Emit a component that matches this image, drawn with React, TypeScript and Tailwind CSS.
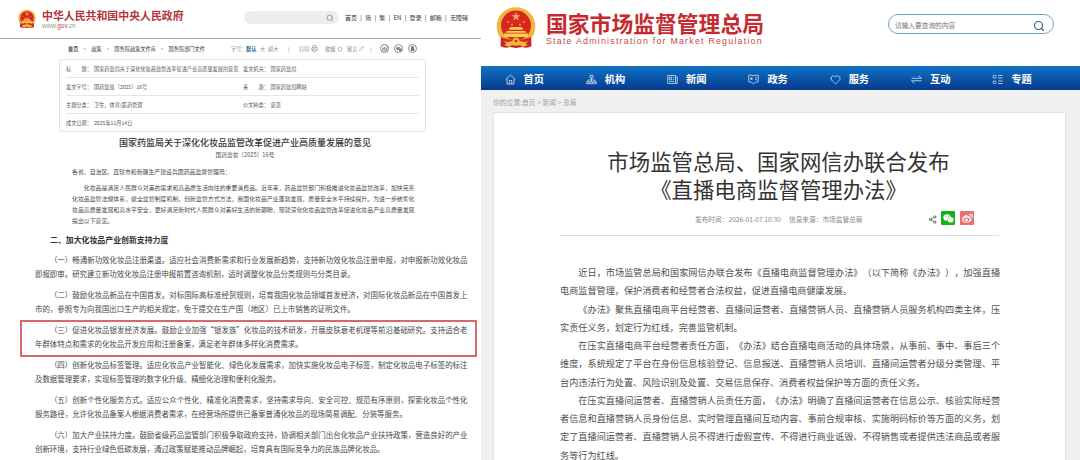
import { FaQq, FaWeibo, FaWeixin } from "react-icons/fa";
import { Heart, Pencil, Printer, Search, Share2, Star } from "lucide-react";

const docMeta = [
  ["标　　题：", "国家药监局关于深化化妆品监管改革促进产业高质量发展的意见", "发文机关：", "国家药监局"],
  ["发文字号：", "国药监妆〔2025〕16号", "来　　源：", "国家药监局网站"],
  ["主题分类：", "卫生、体育\\医药管理", "公文种类：", "意见"],
  ["成文日期：", "2025年11月14日", "", ""],
];

const intro = [
  "　　化妆品是满足人民群众对美的需求和高品质生活向往的重要消费品。近年来，药品监管部门积极推进化妆品监管改革，加快完善",
  "化妆品监管法规体系，健全监管制度机制，创新监管方式方法，我国化妆品产业蓬勃发展，质量安全水平持续提升。为进一步统筹化",
  "妆品高质量发展和高水平安全，更好满足新时代人民群众对美好生活的新期盼，现就深化化妆品监管改革促进化妆品产业高质量发展",
  "提出以下意见。",
];

const articles = [
  [
    "　　（一）畅通新功效化妆品注册渠道。适应社会消费新需求和行业发展新趋势，支持新功效化妆品注册申报，对申报新功效化妆品",
    "即报即审。研究建立新功效化妆品注册申报前置咨询机制，适时调整化妆品分类规则与分类目录。",
  ],
  [
    "　　（二）鼓励化妆品新品在中国首发。对标国际高标准经贸规则，培育我国化妆品领域首发经济，对国际化妆品新品在中国首发上",
    "市的，参照专为向我国出口生产的相关规定，免于提交在生产国（地区）已上市销售的证明文件。",
  ],
  [
    "　　（三）促进化妆品银发经济发展。鼓励企业加强“银发族”化妆品的技术研发，开展皮肤衰老机理等前沿基础研究。支持适合老",
    "年群体特点和需求的化妆品开发应用和注册备案，满足老年群体多样化消费需求。",
  ],
  [
    "　　（四）创新化妆品标签管理。适应化妆品产业智能化、绿色化发展需求，加快实施化妆品电子标签，制定化妆品电子标签的标注",
    "及数据管理要求，实现标签管理的数字化升级、精细化治理和便利化服务。",
  ],
  [
    "　　（五）创新个性化服务方式。适应公众个性化、精准化消费需求，坚持需求导向、安全可控、规范有序原则，探索化妆品个性化",
    "服务路径，允许化妆品备案人根据消费者需求，在经营场所提供已备案普通化妆品的现场简易调配、分装等服务。",
  ],
  [
    "　　（六）加大产业扶持力度。鼓励省级药品监管部门积极争取政府支持，协调相关部门出台化妆品产业扶持政策，营造良好的产业",
    "创新环境，支持行业绿色低碳发展，通过政策赋能推动品牌崛起，培育具有国际竞争力的民族品牌化妆品。",
  ],
];

const newsLines = [
  "　　近日，市场监管总局和国家网信办联合发布《直播电商监督管理办法》（以下简称《办法》），加强直播",
  "电商监督管理，保护消费者和经营者合法权益，促进直播电商健康发展。",
  "　　《办法》聚焦直播电商平台经营者、直播间运营者、直播营销人员、直播营销人员服务机构四类主体，压",
  "实责任义务，划定行为红线，完善监管机制。",
  "　　在压实直播电商平台经营者责任方面，《办法》结合直播电商活动的具体场景，从事前、事中、事后三个",
  "维度，系统规定了平台在身份信息核验登记、信息报送、直播营销人员培训、直播间运营者分级分类管理、平",
  "台内违法行为处置、风险识别及处置、交易信息保存、消费者权益保护等方面的责任义务。",
  "　　在压实直播间运营者、直播营销人员责任方面，《办法》明确了直播间运营者在信息公示、核验实际经营",
  "者信息和直播营销人员身份信息、实时管理直播间互动内容、事前合规审核、实施明码标价等方面的义务，划",
  "定了直播间运营者、直播营销人员不得进行虚假宣传、不得进行商业诋毁、不得销售或者提供违法商品或者服",
  "务等行为红线。",
];

function Emblem({ className }: { className: string }) {
  return (
    <svg viewBox="0 0 40 42" className={className}>
      <path d="M5 28 L35 28 L35.5 39 Q31 42 26 40 L20 41 L14 40 Q9 42 4.500 39 Z" fill="#c9251f" />
      <circle cx="20" cy="19.500" r="19.300" fill="#f0b53c" />
      <circle cx="20" cy="18.500" r="15" fill="#d9271f" />
      <path d="M20 5.200l1.100 3.100h3.300l-2.700 2 1 3.200-2.700-2-2.700 2 1-3.200-2.700-2h3.300z" fill="#f3b06a" />
      <g fill="#f3a860">
        <circle cx="12" cy="15" r="1" />
        <circle cx="16" cy="17.500" r="1" />
        <circle cx="24" cy="17.500" r="1" />
        <circle cx="28" cy="15" r="1" />
      </g>
      <path
        d="M13 21.500l2-1.500h10l2 1.500v1.300H13zM11 24h18l1.500 1.800H9.500zM8 26.500h24v3.500H8z"
        fill="#f8cf52"
      />
      <path d="M5 30q15 6 30 0v4l-7 1-8-2-8 2-7-1z" fill="#d9271f" />
      <circle cx="20" cy="34" r="3.600" fill="#f0b53c" />
      <path d="M8 38l5-3 3 3-3 2zM32 38l-5-3-3 3 3 2z" fill="#f0b53c" />
      <circle cx="20" cy="34" r="1.300" fill="#d9271f" />
    </svg>
  );
}

// line icons of the blue navigation bar, all on a 22 unit grid
const navItems = [
  {
    label: "首页",
    icon: <path d="M1.500 11L11 2l9.500 9M4 9.500V20h14V9.500M8.500 20v-7h5v7" />,
  },
  {
    label: "机构",
    icon: (
      <path d="M8 2.500h6v5H8zM11 7.500V12M4 15.500V12h14v3.500M11 12v3.500M1.500 15.500h5v4h-5zM8.500 15.500h5v4h-5zM15.500 15.500h5v4h-5z" />
    ),
  },
  {
    label: "新闻",
    icon: (
      <path d="M1.500 3h15.500v16H1.500zM17 6h3.500v13H17M4.500 6.500h4.500v5H4.500zM11.500 7h3M11.500 11h3M4.500 15h10" />
    ),
  },
  {
    label: "政务",
    icon: (
      <>
        <path d="M1.500 2.500q5-1 9.500 1 4.500-2 9.500-1v13q-5 0-9.500 4-4.500-4-9.500-4zM14 7.500h4M14 11.500h4" />
        <path
          d="M7 6l1 2.200h2L8.500 9.800l.5 2.200-2-1.200-2 1.200.5-2.200L4 8.200h2z"
          fill="currentColor"
          stroke="none"
        />
      </>
    ),
  },
  { label: "服务", icon: <Heart width="22" height="22" strokeWidth={1.7} /> },
  { label: "互动", icon: <path d="M1 8.500h20l-6-5M21 13.500H1l6 5" /> },
  {
    label: "专题",
    icon: (
      <>
        <circle cx="5" cy="5.500" r="3" />
        <circle cx="5" cy="16.500" r="3" />
        <path d="M12 3h9M12 8h9M12 14h9M12 19h9" />
      </>
    ),
  },
];

function Lines({ lines, lineClass }: { lines: string[]; lineClass: string }) {
  return (
    <>
      {lines.map((line, index) => (
        <p
          key={line}
          className={`${lineClass} whitespace-nowrap ${
            line.length > 45 && index < lines.length - 1 ? "[text-align-last:justify]" : ""
          }`}
        >
          {line}
        </p>
      ))}
    </>
  );
}

function GovDocument() {
  return (
    <section className="flex h-[460px] w-[481px] shrink-0 flex-col overflow-hidden bg-white">
      <header className="flex h-[39px] shrink-0 border-b border-[#a3b0b0]">
        <Emblem className="mt-[9px] ml-[18px] h-[20px] w-[18px]" />
        <div className="mt-[8px] ml-[6px] w-[202px] whitespace-nowrap">
          <h1 className="text-[10.9px] leading-[15px] font-bold text-[#b3353b]">
            中华人民共和国中央人民政府
          </h1>
          <p className="font-['Liberation_Sans'] text-[6.4px] leading-[5px] text-[#999]">
            www.<span className="text-[#c0474b]">gov</span>.cn
          </p>
        </div>
        <div className="mt-[11px] flex h-[13px] w-[95px] items-center justify-end rounded-full bg-[#eeeeee] pr-[5px]">
          <Search className="size-[8px] text-[#777]" strokeWidth={2} />
        </div>
        <nav className="mt-[13px] ml-[6px] flex h-[10px] w-[123px] items-center justify-between text-[6px] leading-none whitespace-nowrap text-[#333]">
          <span>首页</span>
          <span>|</span>
          <span>简</span>
          <span>|</span>
          <span>繁</span>
          <span>|</span>
          <span>EN</span>
          <span>|</span>
          <span>登录</span>
          <span>|</span>
          <span>邮箱</span>
          <span>|</span>
          <span>无障碍</span>
        </nav>
      </header>

      <div className="flex h-[19px] shrink-0 items-center pl-[68px] text-[5.2px] leading-none whitespace-nowrap">
        <div className="flex w-[137px] justify-between text-[#333]">
          <span className="font-medium">首页</span>
          <span className="text-[#999]">&gt;</span>
          <span>政策</span>
          <span className="text-[#999]">&gt;</span>
          <span>国务院政策文件库</span>
          <span className="text-[#999]">&gt;</span>
          <span>国务院部门文件</span>
        </div>
        <div className="ml-[26px] flex items-center text-[#888]">
          <span className="w-[15px]">字号：</span>
          <span className="w-[14px] font-bold text-[#1c5f86]">默认</span>
          <span className="w-[8px]">大</span>
          <span className="w-[20px]">超大</span>
          <span className="w-[11px]">|</span>
          <span className="w-[12px]">打印</span>
          <Printer className="mr-[7px] size-[7px]" strokeWidth={2} />
          <span className="w-[12px]">收藏</span>
          <Star className="mr-[4px] size-[6px]" strokeWidth={2} />
          <span className="w-[12px]">留言</span>
          <Pencil className="mr-[6px] size-[5px]" strokeWidth={2} />
          <span className="w-[10px]">|</span>
          <div className="flex gap-[5px]">
            <span className="flex size-[9px] items-center justify-center rounded-full border border-[#888] text-[#777]">
              <FaWeibo className="size-[6px]" />
            </span>
            <span className="flex size-[9px] items-center justify-center rounded-full border border-[#888] text-[#777]">
              <FaWeixin className="size-[6px]" />
            </span>
            <span className="flex size-[9px] items-center justify-center rounded-full border border-[#888] text-[#777]">
              <FaQq className="size-[5px]" />
            </span>
          </div>
        </div>
      </div>

      <div className="mt-px ml-[59px] h-[73px] w-[367px] shrink-0 rounded-[3px] border border-[#e2e2e2] px-[6px] shadow-[0_0_1px_#eee]">
        {docMeta.map(([label, value, label2, value2]) => (
          <div
            key={label}
            className="flex h-[18px] items-center border-b border-[#e6e6e6] text-[5.17px] leading-none whitespace-nowrap text-[#555] last:border-b-0"
          >
            <span className="w-[28px]">{label}</span>
            <span className="w-[149px]">{value}</span>
            <span className="w-[27.500px]">{label2}</span>
            <span>{value2}</span>
          </div>
        ))}
      </div>

      <h2 className="mt-[4px] w-[490px] shrink-0 text-center text-[9px] leading-[14px] font-medium whitespace-nowrap text-[#333]">
        国家药监局关于深化化妆品监管改革促进产业高质量发展的意见
      </h2>
      <p className="w-[490px] shrink-0 text-center text-[5.7px] leading-[10px] text-[#555]">
        国药监妆〔2025〕16号
      </p>

      <div className="mt-[6px] ml-[72px] w-[342.500px] shrink-0 text-[5.88px] text-[#4a4a4a]">
        <p className="mb-[5px] leading-[11px] whitespace-nowrap">
          各省、自治区、直辖市和新疆生产建设兵团药品监督管理局：
        </p>
        <Lines lines={intro} lineClass="leading-[11px]" />
      </div>

      <h3 className="mt-[8px] ml-[50px] shrink-0 text-[7.9px] leading-[12px] font-semibold text-[#333]">
        二、加大化妆品产业创新支持力度
      </h3>

      <div className="relative mt-[7px] ml-[35px] w-[432.500px] shrink-0 text-[7.44px] text-[#484848]">
        {articles.map((lines) => (
          <div key={lines[0]} className="mb-[7px]">
            <Lines lines={lines} lineClass="leading-[14px]" />
          </div>
        ))}
        {/* highlight frame around article three */}
        <div className="absolute top-[67px] -left-[15px] h-[37px] w-[457px] border-2 border-[#d9686a]" />
      </div>
    </section>
  );
}

function MarketNews() {
  return (
    <section className="flex h-[460px] flex-1 flex-col overflow-hidden bg-[#f0f0f0]">
      <header className="flex h-[66px] shrink-0 bg-white">
        <Emblem className="mt-[7px] ml-[15px] h-[42px] w-[40px]" />
        <div className="mt-[9px] ml-[10px] w-[342px] whitespace-nowrap">
          <h1 className="text-[21.8px] leading-[27px] font-bold text-[#c62a2e]">
            国家市场监督管理总局
          </h1>
          <p className="font-['Liberation_Sans'] text-[8.8px] leading-[10px] tracking-[1.24px] text-[#c9484a]">
            State Administration for Market Regulation
          </p>
        </div>
        <div className="mt-[14px] flex h-[20px] w-[166px] items-center justify-between rounded-full border border-[#6fa3cc] pr-[8px] pl-[6px]">
          <span className="mt-[2px] text-[6.7px] leading-none text-[#777]">请输入要查询的内容</span>
          <Search className="mt-[3px] size-[12px] text-[#2f5f8c]" strokeWidth={2.3} />
        </div>
      </header>

      <nav className="flex h-[24px] shrink-0 items-center bg-gradient-to-b from-[#1173c6] to-[#083a8c] pl-[23.500px] text-white">
        {navItems.map((item) => (
          <div key={item.label} className="flex w-[81.300px] shrink-0 items-center pt-[2px]">
            <svg
              viewBox="0 0 22 22"
              className="size-[11px] text-[#cfe4f7]"
              fill="none"
              stroke="currentColor"
              strokeWidth="1.600"
            >
              {item.icon}
            </svg>
            <span className="ml-[8px] text-[10.2px] leading-none font-bold">{item.label}</span>
          </div>
        ))}
      </nav>

      <p className="h-[22px] shrink-0 pl-[12px] text-[6.8px] leading-[25px] text-[#a3a3a3]">
        你的位置:首页 &gt; 新闻 &gt; 总局
      </p>

      <article className="ml-[12px] flex h-[360px] w-[573px] shrink-0 flex-col border border-[#e3e3e3] bg-white px-[66px]">
        <h2 className="mt-[34px] mr-[2px] text-center text-[21.4px] leading-[28px] whitespace-nowrap text-[#333]">
          市场监管总局、国家网信办联合发布
          <br />
          《直播电商监督管理办法》
        </h2>
        <div className="mt-[8px] flex h-[17px] shrink-0 items-center text-[6.7px] leading-none whitespace-nowrap text-[#888]">
          <span className="ml-[135px] w-[94px]">发布时间：2026-01-07 10:30</span>
          <span className="w-[139px]">信息来源：市场监管总局</span>
          <Share2 className="-mt-[1px] size-[9px] text-[#555]" strokeWidth={2} />
          <span className="-mt-[3px] ml-[4px] flex size-[14px] items-center justify-center rounded-[1px] bg-[#16b01d] text-white">
            <FaWeixin className="size-[11px]" />
          </span>
          <span className="-mt-[3px] ml-[5px] flex size-[14px] items-center justify-center rounded-[1px] bg-[#e8716f] text-white">
            <FaWeibo className="size-[11px]" />
          </span>
        </div>
        <div className="mt-[7px] h-px shrink-0 bg-[#dcdcdc]" />
        <div className="mt-[27px] w-[440px] text-[9.15px] text-[#505050]">
          <Lines lines={newsLines} lineClass="leading-[18.250px]" />
        </div>
      </article>
    </section>
  );
}

export default function App() {
  return (
    <main className="flex h-[460px] w-[1080px] overflow-hidden bg-white font-['Noto_Sans_CJK_SC',sans-serif] [text-spacing-trim:space-all]">
      <GovDocument />
      <MarketNews />
    </main>
  );
}
